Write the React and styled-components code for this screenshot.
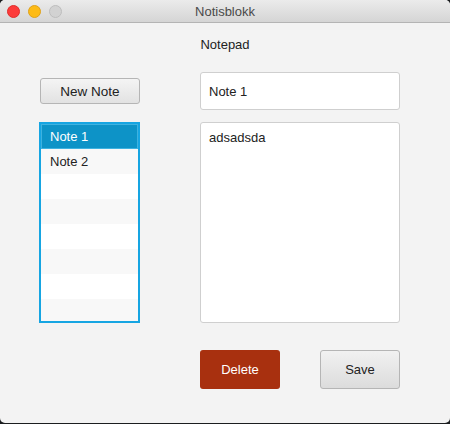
import React, { useState } from "react";
import styled, { createGlobalStyle } from "styled-components";

const GlobalStyle = createGlobalStyle`
  html, body {
    margin: 0;
    padding: 0;
    background: #1b1d1f;
  }
  body {
    font-family: "Liberation Sans", Arial, sans-serif;
  }
`;

const notes = [
  { title: "Note 1", body: "adsadsda" },
  { title: "Note 2", body: "" },
];

const App = () => {
  const [selected, setSelected] = useState(0);
  const [title, setTitle] = useState(notes[0].title);
  const [body, setBody] = useState(notes[0].body);

  const rows = Array.from({ length: 8 }, (_, i) => notes[i]);

  return (
    <>
      <GlobalStyle />
      <Window>
        <TitleBar>
          <Lights>
            <Light color="#fc3b3a" border="#de2e2c" />
            <Light color="#fdbb16" border="#dea11a" />
            <Light color="#d2d2d2" border="#bdbdbd" />
          </Lights>
          <WindowTitle>Notisblokk</WindowTitle>
        </TitleBar>
        <Content>
          <Heading>Notepad</Heading>
          <Grid>
            <NewNoteBtn>New Note</NewNoteBtn>
            <TitleInput value={title} onChange={(e) => setTitle(e.target.value)} />
            <List>
              {rows.map((n, i) => (
                <Row
                  key={i}
                  $odd={i % 2 === 1}
                  $selected={i === selected}
                  onClick={() => {
                    if (!n) return;
                    setSelected(i);
                    setTitle(n.title);
                    setBody(n.body);
                  }}
                >
                  {n ? n.title : ""}
                </Row>
              ))}
            </List>
            <BodyArea value={body} onChange={(e) => setBody(e.target.value)} />
            <span />
            <Actions>
              <DeleteBtn>Delete</DeleteBtn>
              <SaveBtn>Save</SaveBtn>
            </Actions>
          </Grid>
        </Content>
      </Window>
    </>
  );
};

const Window = styled.div`
  width: 450px;
  height: 423px;
  background: #f3f3f3;
  border-radius: 5px;
  overflow: hidden;
  display: flex;
  flex-direction: column;
`;

const TitleBar = styled.div`
  height: 22px;
  flex-shrink: 0;
  display: flex;
  align-items: center;
  justify-content: center;
  position: relative;
  background: linear-gradient(#ebebeb, #d5d5d5);
  border-bottom: 1px solid #b4b4b4;
`;

const Lights = styled.div`
  position: absolute;
  left: 7px;
  top: 5px;
  display: flex;
  gap: 8px;
`;

const Light = styled.span`
  width: 11px;
  height: 11px;
  border-radius: 50%;
  background: ${(p) => p.color};
  border: 0.5px solid ${(p) => p.border};
`;

const WindowTitle = styled.div`
  font-size: 13px;
  color: #4a4a4a;
`;

const Content = styled.div`
  padding: 14px 0 0 0;
`;

const Heading = styled.div`
  text-align: center;
  font-size: 13px;
  color: #222;
  height: 16px;
  line-height: 16px;
`;

const Grid = styled.div`
  display: grid;
  grid-template-columns: 101px 200px;
  column-gap: 60px;
  padding-left: 39px;
  margin-top: 19px;
  align-items: center;
`;

const NewNoteBtn = styled.button`
  width: 100px;
  height: 26px;
  margin-left: 1px;
  border: 1px solid #b5b5b5;
  border-radius: 3px;
  background: linear-gradient(#f4f4f4, #e2e2e2);
  font-family: inherit;
  font-size: 13.5px;
  color: #222;
  padding: 0;
`;

const TitleInput = styled.input`
  box-sizing: border-box;
  width: 200px;
  height: 38px;
  border: 1px solid #cfcfcf;
  border-radius: 3px;
  background: #fff;
  padding: 0 8px;
  font-family: inherit;
  font-size: 13px;
  color: #222;
  outline: none;
`;

const List = styled.div`
  box-sizing: border-box;
  width: 101px;
  height: 201px;
  margin-top: 12px;
  border: 2px solid #16a5e2;
  background: #fff;
  overflow: hidden;
  align-self: start;
`;

const Row = styled.div`
  box-sizing: border-box;
  height: 25px;
  line-height: 23px;
  padding-left: 8px;
  font-size: 13px;
  color: ${(p) => (p.$selected ? "#fff" : "#222")};
  background: ${(p) => (p.$selected ? "#0d93c7" : p.$odd ? "#f8f8f8" : "#fff")};
  border: 1px solid ${(p) => (p.$selected ? "#3eb2e0" : "transparent")};
  cursor: default;
`;

const BodyArea = styled.textarea`
  box-sizing: border-box;
  width: 200px;
  height: 201px;
  margin-top: 12px;
  border: 1px solid #cfcfcf;
  border-radius: 3px;
  background: #fff;
  padding: 7px 8px;
  resize: none;
  font-family: inherit;
  font-size: 13px;
  color: #222;
  outline: none;
  align-self: start;
`;

const Actions = styled.div`
  display: flex;
  justify-content: space-between;
  margin-top: 27px;
`;

const DeleteBtn = styled.button`
  width: 80px;
  height: 39px;
  border: none;
  border-radius: 3px;
  background: #a8300f;
  color: #fff;
  font-family: inherit;
  font-size: 13px;
  padding: 0;
`;

const SaveBtn = styled(DeleteBtn)`
  border: 1px solid #b5b5b5;
  background: linear-gradient(#f1f1f1, #dcdcdc);
  color: #222;
`;

export default App;
